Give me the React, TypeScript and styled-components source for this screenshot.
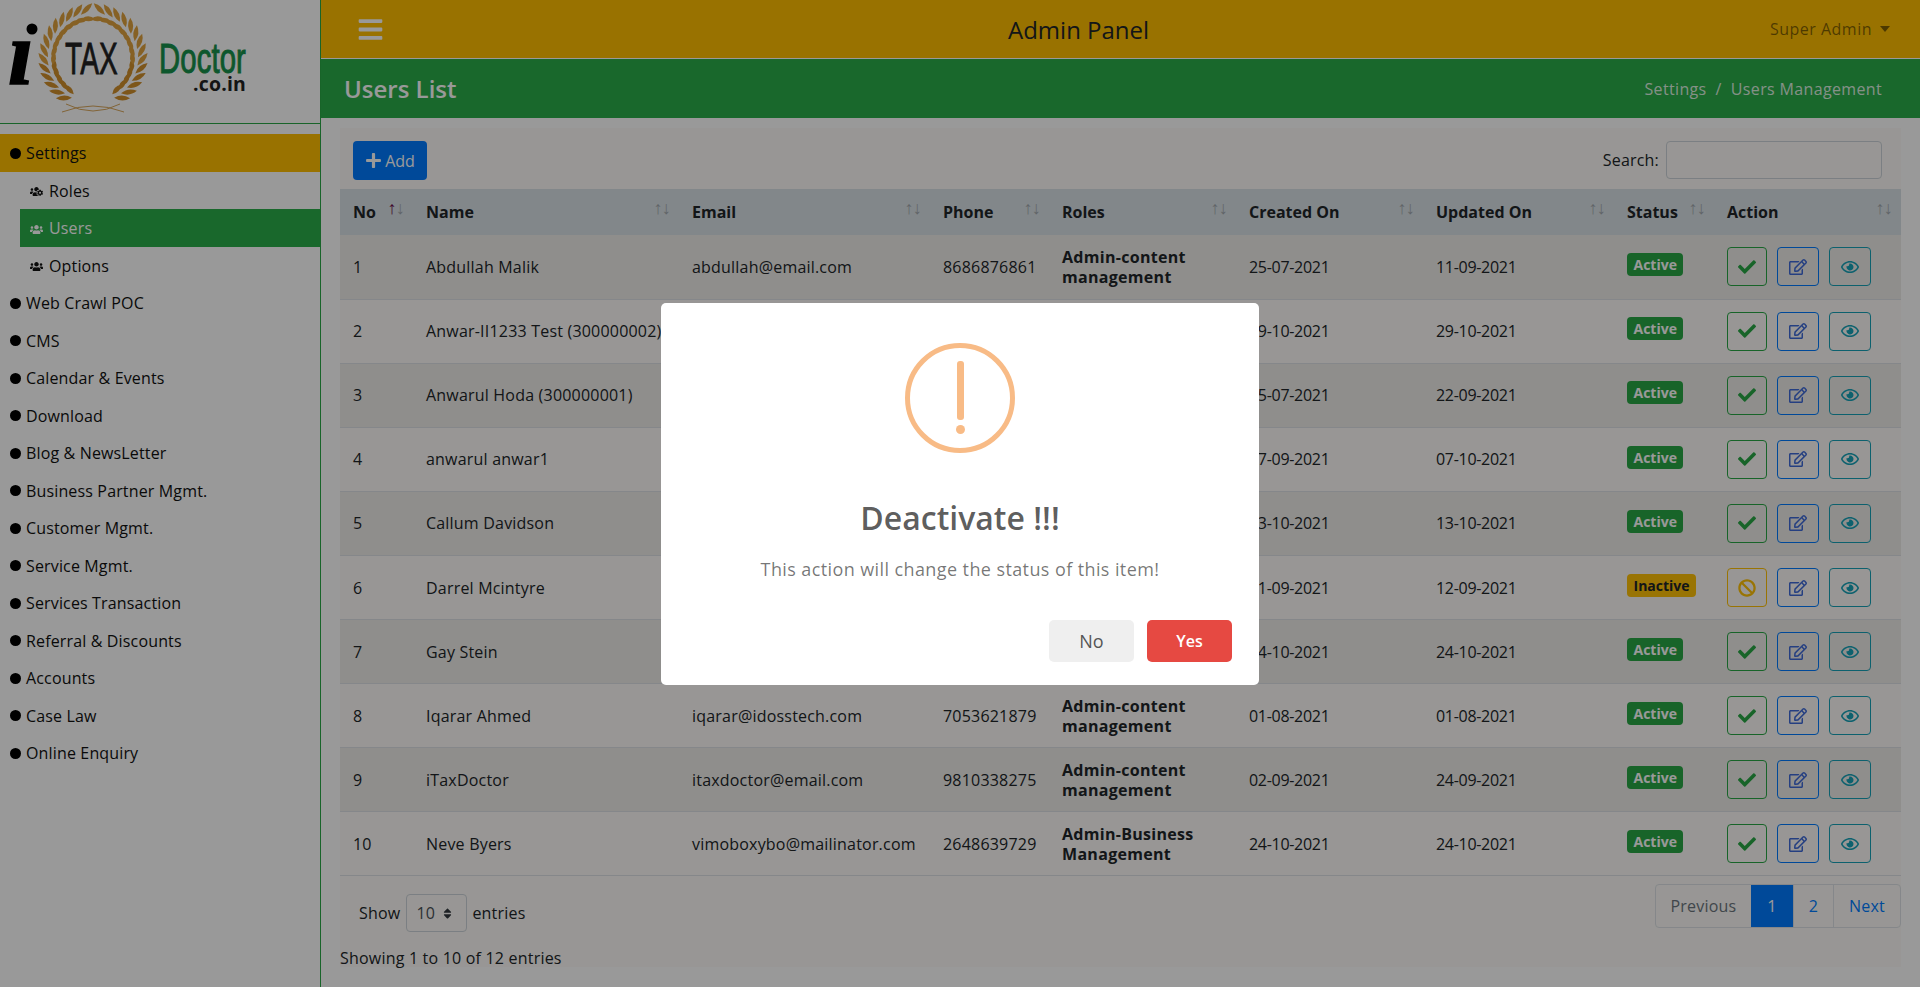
import styled, { createGlobalStyle } from 'styled-components'
import { FaBars, FaPlus, FaCheck, FaRegEdit, FaRegEye, FaBan, FaUsers, FaUsersCog, FaSort } from 'react-icons/fa'

const menuAfter = [
  'Web Crawl POC',
  'CMS',
  'Calendar & Events',
  'Download',
  'Blog & NewsLetter',
  'Business Partner Mgmt.',
  'Customer Mgmt.',
  'Service Mgmt.',
  'Services Transaction',
  'Referral & Discounts',
  'Accounts',
  'Case Law',
  'Online Enquiry',
]

const columns = [
  { title: 'No', width: 73, sorted: true },
  { title: 'Name', width: 266 },
  { title: 'Email', width: 251 },
  { title: 'Phone', width: 119 },
  { title: 'Roles', width: 187 },
  { title: 'Created On', width: 187 },
  { title: 'Updated On', width: 191 },
  { title: 'Status', width: 100 },
  { title: 'Action', width: 187 },
]

// email, phone and role of rows 2-7 sit behind the dialog, so they stay empty
const users = [
  ['Abdullah Malik', 'abdullah@email.com', '8686876861', 'Admin-content management', '25-07-2021', '11-09-2021', 'Active'],
  ['Anwar-II1233 Test (300000002)', '', '', '', '29-10-2021', '29-10-2021', 'Active'],
  ['Anwarul Hoda (300000001)', '', '', '', '25-07-2021', '22-09-2021', 'Active'],
  ['anwarul anwar1', '', '', '', '07-09-2021', '07-10-2021', 'Active'],
  ['Callum Davidson', '', '', '', '13-10-2021', '13-10-2021', 'Active'],
  ['Darrel Mcintyre', '', '', '', '01-09-2021', '12-09-2021', 'Inactive'],
  ['Gay Stein', '', '', '', '24-10-2021', '24-10-2021', 'Active'],
  ['Iqarar Ahmed', 'iqarar@idosstech.com', '7053621879', 'Admin-content management', '01-08-2021', '01-08-2021', 'Active'],
  ['iTaxDoctor', 'itaxdoctor@email.com', '9810338275', 'Admin-content management', '02-09-2021', '24-09-2021', 'Active'],
  ['Neve Byers', 'vimoboxybo@mailinator.com', '2648639729', 'Admin-Business Management', '24-10-2021', '24-10-2021', 'Active'],
]

const GlobalStyle = createGlobalStyle`
  html, body {
    margin: 0;
    padding: 0;
    height: 987px;
    overflow: hidden;
    background: #fff;
    color: #212529;
    font-family: "Open Sans", "Liberation Sans", sans-serif;
    font-size: 16px;
    letter-spacing: 0.2px;
  }
  * { box-sizing: border-box; }
`

const Page = styled.div`
  display: flex;
  height: 987px;
`

const Sidebar = styled.aside`
  width: 321px;
  flex-shrink: 0;
  border-right: 1px solid #28a745;
`

const LogoBox = styled.div`
  height: 124px;
  border-bottom: 1px solid #28a745;
  margin-bottom: 10px;
`

const MenuItem = styled.div<{ $active?: boolean }>`
  height: 37.5px;
  display: flex;
  align-items: center;
  gap: 5px;
  padding: 1px 0 0 10px;
  letter-spacing: 0.15px;
  color: #111;
  background: ${(p) => (p.$active ? '#ffbf00' : 'transparent')};
`

const Bullet = styled.span`
  width: 11px;
  height: 11px;
  border-radius: 50%;
  background: #000;
`

const SubItem = styled.div<{ $active?: boolean }>`
  height: 37.5px;
  margin-left: 20px;
  padding: 1px 0 0 10px;
  display: flex;
  align-items: center;
  gap: 6px;
  letter-spacing: 0.15px;
  color: ${(p) => (p.$active ? '#fff' : '#111')};
  background: ${(p) => (p.$active ? '#2bae4a' : 'transparent')};
  svg { font-size: 13px; margin-top: 2px; }
`

const Main = styled.main`
  flex: 1;
  min-width: 0;
  display: flex;
  flex-direction: column;
`

const TopBar = styled.header`
  height: 59px;
  background: #ffbf00;
  border-bottom: 1px solid #fff;
  display: flex;
  align-items: center;
  padding: 0 30px 0 36px;
  color: #fff;
`

const Burger = styled.div`
  font-size: 27px;
  display: flex;
`

const PanelTitle = styled.div`
  font-size: 24px;
  letter-spacing: 0;
  color: #212529;
  margin-left: 624px;
`

const UserMenu = styled.div`
  margin-left: auto;
  display: flex;
  align-items: center;
  gap: 8px;
  letter-spacing: 0.5px;
  color: rgba(0, 0, 0, 0.5);
`

const Caret = styled.span`
  border-top: 6px solid rgba(0, 0, 0, 0.5);
  border-left: 5.5px solid transparent;
  border-right: 5.5px solid transparent;
`

const TitleBar = styled.div`
  height: 59px;
  background: #2bae4a;
  color: #fff;
  display: flex;
  align-items: center;
  justify-content: space-between;
  padding: 0 38px 0 23px;
`

const PageTitle = styled.h1`
  margin: 0;
  font-size: 24px;
  font-weight: 600;
  letter-spacing: 0;
`

const Breadcrumb = styled.div`
  letter-spacing: 0.35px;
  color: rgba(255, 255, 255, 0.85);
  display: flex;
  gap: 9px;
`

const Card = styled.section`
  margin: 10px 19px 0 19px;
  background: #fdfbf8;
  height: 839px;
  width: 1561px;
`

const Toolbar = styled.div`
  height: 61px;
  display: flex;
  align-items: flex-start;
  justify-content: space-between;
  padding: 13px 19px 0 13px;
`

const AddButton = styled.button`
  width: 74px;
  height: 39px;
  border: 0;
  border-radius: 4px;
  background: #007bff;
  color: #fff;
  font: inherit;
  display: flex;
  align-items: center;
  justify-content: center;
  gap: 3px;
  svg { font-size: 17px; }
`

const SearchLabel = styled.label`
  display: flex;
  align-items: center;
  gap: 7px;
`

const SearchInput = styled.input`
  width: 216px;
  height: 38px;
  border: 1px solid #ced4da;
  border-radius: 4px;
  background: transparent;
`

const Table = styled.table`
  width: 1561px;
  table-layout: fixed;
  border-collapse: collapse;
`

const HeadCell = styled.th`
  height: 46px;
  padding: 0 9px 0 13px;
  background: #d9e1e6;
  text-align: left;
  font-weight: 700;
  letter-spacing: 0;
  color: #212529;
`

const HeadInner = styled.div`
  display: flex;
  align-items: center;
  justify-content: space-between;
`

const SortArrows = styled.span`
  display: flex;
  margin-top: -10px;
  font-size: 18px;
  font-weight: 400;
  line-height: 1;
  letter-spacing: -0.8px;
`

const SortArrow = styled.span<{ $on?: boolean }>`
  opacity: ${(p) => (p.$on ? 1 : 0.3)};
  color: ${(p) => (p.$on ? '#6a0f4a' : 'inherit')};
`

const Row = styled.tr<{ $odd: boolean }>`
  height: 64.1px;
  background: ${(p) => (p.$odd ? '#efedea' : 'transparent')};
  border-bottom: 1px solid #dee2e6;
`

const Cell = styled.td<{ $date?: boolean }>`
  padding: 0 13px;
  letter-spacing: ${(p) => (p.$date ? '-0.3px' : '0.2px')};
  color: #212529;
  white-space: nowrap;
`

const RoleCell = styled(Cell)`
  white-space: normal;
  font-weight: 700;
  line-height: 20px;
  letter-spacing: 0.3px;
`

const Badge = styled.span<{ $active: boolean }>`
  display: inline-flex;
  align-items: center;
  height: 23px;
  padding: 0 6.5px;
  margin-top: -8px;
  vertical-align: middle;
  border-radius: 4px;
  font-size: 14px;
  font-weight: 700;
  letter-spacing: 0;
  background: ${(p) => (p.$active ? '#28a745' : '#ffc107')};
  color: ${(p) => (p.$active ? '#fff' : '#212529')};
`

const Actions = styled.div`
  display: flex;
  gap: 10px;
`

const ActionButton = styled.button<{ $color: string; $wide?: boolean }>`
  width: ${(p) => (p.$wide ? '42px' : '40px')};
  height: 39px;
  padding: 0;
  display: flex;
  align-items: center;
  justify-content: center;
  background: transparent;
  border: 1px solid ${(p) => p.$color};
  border-radius: 4px;
  color: ${(p) => p.$color};
  font-size: 18px;
`

const EditIcon = styled(FaRegEdit)`
  color: #3f6ad8;
`

const Footer = styled.div`
  display: flex;
  justify-content: space-between;
  align-items: flex-start;
`

const FooterLeft = styled.div`
  display: flex;
  flex-direction: column;
`

const LengthRow = styled.div`
  display: flex;
  align-items: center;
  gap: 5px;
  margin: 18px 0 0 19px;
`

const LengthSelect = styled.div`
  width: 61px;
  height: 38px;
  margin-left: 1px;
  border: 1px solid #ced4da;
  border-radius: 4px;
  display: flex;
  align-items: center;
  gap: 6px;
  padding-left: 9px;
  color: #495057;
  svg { font-size: 13px; color: #343a40; }
`

const EntriesInfo = styled.div`
  margin-top: 15px;
`

const Pagination = styled.div`
  display: flex;
  height: 44px;
  margin-top: 8px;
  border: 1px solid #dee2e6;
  border-radius: 4px;
`

const PageLink = styled.div<{ $state?: 'active' | 'disabled' }>`
  display: flex;
  align-items: center;
  padding: 0 ${(p) => (p.$state === 'active' ? '16px' : '15px')};
  border-left: ${(p) => (p.$state === 'active' ? '0' : '1px solid #dee2e6')};
  background: ${(p) => (p.$state === 'active' ? '#007bff' : 'transparent')};
  color: ${(p) => (p.$state === 'active' ? '#fff' : p.$state === 'disabled' ? '#6c757d' : '#007bff')};
  &:first-child { border-left: 0; }
`

const Overlay = styled.div`
  position: fixed;
  inset: 0;
  background: rgba(0, 0, 0, 0.4);
  display: flex;
  align-items: center;
  justify-content: center;
`

const Modal = styled.div`
  width: 598px;
  height: 382px;
  background: #fff;
  border-radius: 5px;
  padding-top: 40px;
  display: flex;
  flex-direction: column;
  align-items: center;
`

const WarningIcon = styled.div`
  width: 110px;
  height: 110px;
  border: 5px solid #f8bb86;
  border-radius: 50%;
  display: flex;
  flex-direction: column;
  align-items: center;
  padding-top: 13px;
  gap: 5px;
`

const WarningBar = styled.span`
  width: 7px;
  height: 59px;
  border-radius: 3px;
  background: #f8bb86;
`

const WarningDot = styled.span`
  width: 9px;
  height: 9px;
  border-radius: 50%;
  background: #f8bb86;
`

const ModalTitle = styled.h2`
  margin: 45px 0 0;
  font-size: 32px;
  line-height: 40px;
  font-weight: 600;
  letter-spacing: 0;
  color: rgba(0, 0, 0, 0.65);
`

const ModalText = styled.p`
  margin: 19px 0 0;
  font-size: 18px;
  line-height: 24px;
  letter-spacing: 0.4px;
  color: rgba(0, 0, 0, 0.55);
`

const ModalActions = styled.div`
  align-self: flex-end;
  display: flex;
  gap: 13px;
  margin: 39px 27px 0 0;
`

const ModalButton = styled.button<{ $danger?: boolean }>`
  width: 85px;
  height: 42px;
  border: 0;
  border-radius: 5px;
  font: inherit;
  font-size: ${(p) => (p.$danger ? '16px' : '18px')};
  font-weight: ${(p) => (p.$danger ? 600 : 400)};
  background: ${(p) => (p.$danger ? '#e64942' : '#efefef')};
  color: ${(p) => (p.$danger ? '#fff' : '#555')};
`

function laurelLeaves() {
  const leaves = []
  const cx = 93
  const cy = 58
  for (const side of [-1, 1]) {
    for (let i = 0; i < 14; i++) {
      const deg = 28 + i * 10.5
      const rad = (deg * Math.PI) / 180
      const tangent = side * (90 - deg)
      for (const [radius, tilt, len] of [[45, 30, 16], [41, -18, 13]]) {
        const x = cx + side * Math.sin(rad) * radius
        const y = cy + Math.cos(rad) * radius
        leaves.push(
          <path
            key={`${side}-${i}-${radius}`}
            d={`M0 0 Q5 ${-len / 2} 0 ${-len} Q-5 ${-len / 2} 0 0Z`}
            transform={`translate(${x} ${y}) rotate(${tangent + side * tilt})`}
            fill={i < 5 ? '#d08f2c' : '#e0a23e'}
          />,
        )
      }
    }
  }
  return leaves
}

function Logo() {
  return (
    <svg width="320" height="123" viewBox="0 0 320 123">
      <text x="8" y="84" fontFamily="Liberation Serif" fontWeight="700" fontStyle="italic" fontSize="92" fill="#000" stroke="#000" strokeWidth="1.5">
        ı
      </text>
      <circle cx="32" cy="29" r="5.5" fill="#000" />
      {laurelLeaves()}
      <path d="M62 112 Q93 100 124 112 M66 104 Q93 118 120 104" fill="none" stroke="#d9a75c" strokeWidth="1" />
      <text x="65" y="74" fontFamily="Liberation Sans" fontSize="45" fill="#222" stroke="#222" strokeWidth="0.8" textLength="53" lengthAdjust="spacingAndGlyphs">
        TAX
      </text>
      <text x="159" y="73" fontFamily="Liberation Sans" fontSize="43" fill="#17914b" stroke="#17914b" strokeWidth="1" textLength="87" lengthAdjust="spacingAndGlyphs">
        Doctor
      </text>
      <text x="193" y="91" fontFamily="Open Sans" fontWeight="700" fontSize="20" fill="#222" textLength="53" lengthAdjust="spacingAndGlyphs">
        .co.in
      </text>
    </svg>
  )
}

export default function App() {
  return (
    <>
      <GlobalStyle />
      <Page>
        <Sidebar>
          <LogoBox>
            <Logo />
          </LogoBox>
          <MenuItem $active>
            <Bullet />
            Settings
          </MenuItem>
          <SubItem>
            <FaUsersCog />
            Roles
          </SubItem>
          <SubItem $active>
            <FaUsers />
            Users
          </SubItem>
          <SubItem>
            <FaUsers />
            Options
          </SubItem>
          {menuAfter.map((label) => (
            <MenuItem key={label}>
              <Bullet />
              {label}
            </MenuItem>
          ))}
        </Sidebar>
        <Main>
          <TopBar>
            <Burger>
              <FaBars />
            </Burger>
            <PanelTitle>Admin Panel</PanelTitle>
            <UserMenu>
              Super Admin
              <Caret />
            </UserMenu>
          </TopBar>
          <TitleBar>
            <PageTitle>Users List</PageTitle>
            <Breadcrumb>
              <span>Settings</span>
              <span>/</span>
              <span>Users Management</span>
            </Breadcrumb>
          </TitleBar>
          <Card>
            <Toolbar>
              <AddButton>
                <FaPlus />
                Add
              </AddButton>
              <SearchLabel>
                Search:
                <SearchInput />
              </SearchLabel>
            </Toolbar>
            <Table>
              <colgroup>
                {columns.map((col) => (
                  <col key={col.title} width={col.width} />
                ))}
              </colgroup>
              <thead>
                <tr>
                  {columns.map((col) => (
                    <HeadCell key={col.title}>
                      <HeadInner>
                        {col.title}
                        <SortArrows>
                          <SortArrow $on={col.sorted}>↑</SortArrow>
                          <SortArrow>↓</SortArrow>
                        </SortArrows>
                      </HeadInner>
                    </HeadCell>
                  ))}
                </tr>
              </thead>
              <tbody>
                {users.map((user, index) => {
                  const active = user[6] === 'Active'
                  return (
                    <Row key={user[0]} $odd={index % 2 === 0}>
                      <Cell>{index + 1}</Cell>
                      <Cell>{user[0]}</Cell>
                      <Cell>{user[1]}</Cell>
                      <Cell>{user[2]}</Cell>
                      <RoleCell>{user[3]}</RoleCell>
                      <Cell $date>{user[4]}</Cell>
                      <Cell $date>{user[5]}</Cell>
                      <Cell>
                        <Badge $active={active}>{user[6]}</Badge>
                      </Cell>
                      <Cell>
                        <Actions>
                          <ActionButton $color={active ? '#28a745' : '#ffc107'}>
                            {active ? <FaCheck /> : <FaBan />}
                          </ActionButton>
                          <ActionButton $color="#007bff" $wide>
                            <EditIcon />
                          </ActionButton>
                          <ActionButton $color="#17a2b8" $wide>
                            <FaRegEye />
                          </ActionButton>
                        </Actions>
                      </Cell>
                    </Row>
                  )
                })}
              </tbody>
            </Table>
            <Footer>
              <FooterLeft>
                <LengthRow>
                  Show
                  <LengthSelect>
                    10
                    <FaSort />
                  </LengthSelect>
                  entries
                </LengthRow>
                <EntriesInfo>Showing 1 to 10 of 12 entries</EntriesInfo>
              </FooterLeft>
              <Pagination>
                <PageLink $state="disabled">Previous</PageLink>
                <PageLink $state="active">1</PageLink>
                <PageLink>2</PageLink>
                <PageLink>Next</PageLink>
              </Pagination>
            </Footer>
          </Card>
        </Main>
      </Page>
      <Overlay>
        <Modal>
          <WarningIcon>
            <WarningBar />
            <WarningDot />
          </WarningIcon>
          <ModalTitle>Deactivate !!!</ModalTitle>
          <ModalText>This action will change the status of this item!</ModalText>
          <ModalActions>
            <ModalButton>No</ModalButton>
            <ModalButton $danger>Yes</ModalButton>
          </ModalActions>
        </Modal>
      </Overlay>
    </>
  )
}
